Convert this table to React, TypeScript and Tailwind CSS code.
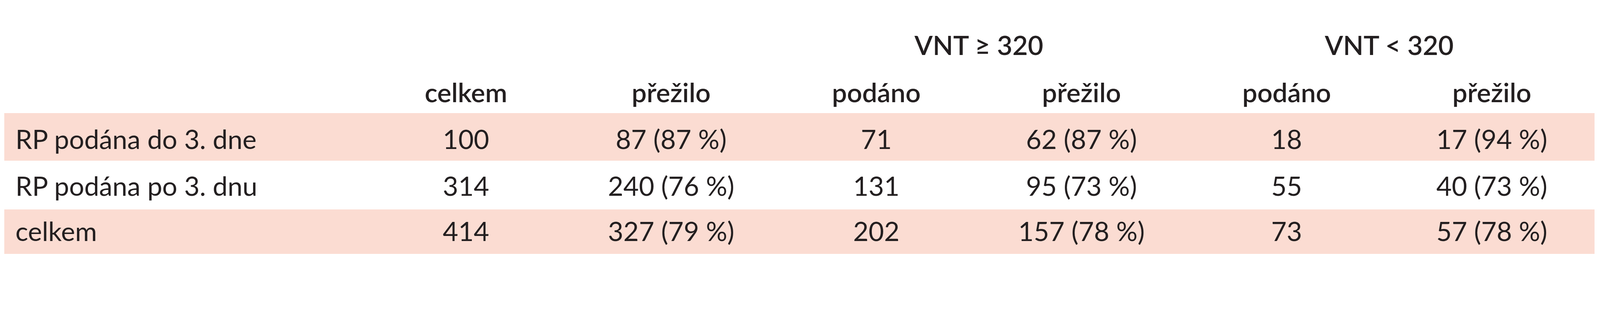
const rows = [
  { label: "RP podána do 3. dne", cells: ["100", "87 (87 %)", "71", "62 (87 %)", "18", "17 (94 %)"], pink: true, cls: "h-[2.96vw] pt-[0.781vw]" },
  { label: "RP podána po 3. dnu", cells: ["314", "240 (76 %)", "131", "95 (73 %)", "55", "40 (73 %)"], pink: false, cls: "h-[3.063vw] pt-[0.74vw]" },
  { label: "celkem", cells: ["414", "327 (79 %)", "202", "157 (78 %)", "73", "57 (78 %)"], pink: true, cls: "h-[2.775vw] pt-[0.514vw]" },
];

const subHeads = ["celkem", "přežilo", "podáno", "přežilo", "podáno", "přežilo"];

// sizes are in vw so the table keeps the reference proportions at any window width
export default function App() {
  return (
    <div className="w-full min-h-screen bg-white text-[#231f20] font-['Lato','Liberation_Sans',sans-serif] text-[1.665vw] leading-[1.665vw]">
      <div className="ml-[0.267vw] mr-[0.349vw]">
        {/* group headers */}
        <div className="grid grid-cols-[22.446vw_repeat(6,1fr)] pt-[1.973vw] font-semibold">
          <div className="col-start-4 col-span-2 text-center whitespace-nowrap">VNT ≥ 320</div>
          <div className="col-span-2 text-center whitespace-nowrap">VNT &lt; 320</div>
        </div>
        <div className="grid grid-cols-[22.446vw_repeat(6,1fr)] mt-[1.295vw] h-[2.158vw] font-semibold">
          <div />
          {subHeads.map((h, i) => (
            <div key={i} className="text-center">{h}</div>
          ))}
        </div>
        {rows.map((r) => (
          <div
            key={r.label}
            className={`grid grid-cols-[22.446vw_repeat(6,1fr)] ${r.cls} ${r.pink ? "bg-[#fbdcd2]" : "bg-white"}`}
          >
            <div className="pl-[0.699vw] whitespace-nowrap">{r.label}</div>
            {r.cells.map((c, i) => (
              <div key={i} className="text-center whitespace-nowrap">{c}</div>
            ))}
          </div>
        ))}
      </div>
    </div>
  );
}
